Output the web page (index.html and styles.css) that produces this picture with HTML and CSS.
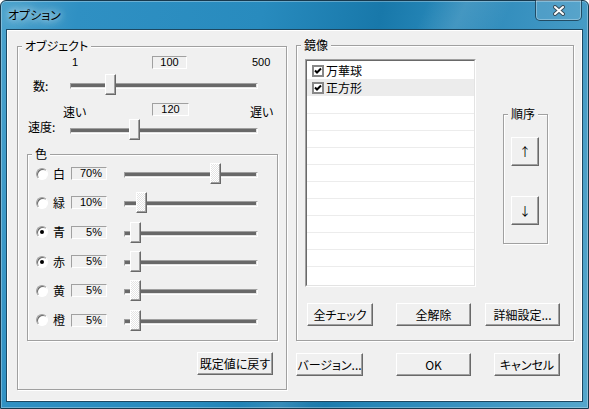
FILE: index.html
```html
<!DOCTYPE html>
<html lang="ja">
<head>
<meta charset="utf-8">
<title>オプション</title>
<link rel="stylesheet" href="styles.css">
</head>
<body>
<div class="window">
  <div class="titlebar">
    <span class="title">オプション</span>
    <div class="close">
      <svg width="12" height="11" viewBox="0 0 12 11">
        <path d="M2 2 L10 9 M10 2 L2 9" stroke="#3a4d5a" stroke-width="4" stroke-linecap="round"/>
        <path d="M2 2 L10 9 M10 2 L2 9" stroke="#fff" stroke-width="2" stroke-linecap="round"/>
      </svg>
    </div>
  </div>
  <div class="client">
    <div class="group obj">
      <span class="gtitle">オブジェクト</span>
      <div class="scale s1">
        <span class="lo num">1</span><span class="vbox num">100</span><span class="hi num">500</span>
      </div>
      <div class="srow r1">
        <span class="slabel">数:</span>
        <div class="track wide"><span class="thumb" style="left:35px"></span></div>
      </div>
      <div class="scale s2">
        <span class="lo">速い</span><span class="vbox num">120</span><span class="hi">遅い</span>
      </div>
      <div class="srow r2">
        <span class="slabel">速度:</span>
        <div class="track wide"><span class="thumb" style="left:59px"></span></div>
      </div>
      <div class="group color">
        <span class="gtitle">色</span>
        <div class="crow"><span class="radio"></span><span class="cname">白</span><span class="vbox pct num">70%</span><div class="track short"><span class="thumb dither" style="left:86px"></span></div></div>
        <div class="crow"><span class="radio"></span><span class="cname">緑</span><span class="vbox pct num">10%</span><div class="track short"><span class="thumb dither" style="left:12px"></span></div></div>
        <div class="crow"><span class="radio on"></span><span class="cname">青</span><span class="vbox pct num">5%</span><div class="track short"><span class="thumb" style="left:6px"></span></div></div>
        <div class="crow"><span class="radio on"></span><span class="cname">赤</span><span class="vbox pct num">5%</span><div class="track short"><span class="thumb" style="left:6px"></span></div></div>
        <div class="crow"><span class="radio"></span><span class="cname">黄</span><span class="vbox pct num">5%</span><div class="track short"><span class="thumb dither" style="left:6px"></span></div></div>
        <div class="crow"><span class="radio"></span><span class="cname">橙</span><span class="vbox pct num">5%</span><div class="track short"><span class="thumb dither" style="left:6px"></span></div></div>
      </div>
      <div class="reset-row"><button class="btn reset">既定値に戻す</button></div>
    </div>
    <div class="right">
      <div class="group mirror">
        <span class="gtitle">鏡像</span>
        <div class="mirror-top">
          <div class="listbox">
            <div class="list-inner">
              <div class="item"><span class="check"><svg width="8" height="8" viewBox="0 0 8 8"><path d="M1 3.5 L3 5.5 L7 1.5" stroke="#000" stroke-width="2" fill="none"/></svg></span><span>万華球</span></div>
              <div class="item sel"><span class="check"><svg width="8" height="8" viewBox="0 0 8 8"><path d="M1 3.5 L3 5.5 L7 1.5" stroke="#000" stroke-width="2" fill="none"/></svg></span><span>正方形</span></div>
              <div class="item"></div>
              <div class="item line"></div>
              <div class="item line"></div>
              <div class="item line"></div>
              <div class="item line"></div>
              <div class="item line"></div>
              <div class="item line"></div>
              <div class="item line"></div>
              <div class="item line"></div>
              <div class="item line"></div>
              <div class="item line"></div>
            </div>
          </div>
          <div class="group order">
            <span class="gtitle">順序</span>
            <button class="btn arrow up">↑</button>
            <button class="btn arrow down">↓</button>
          </div>
        </div>
        <div class="btnrow">
          <button class="btn w66">全チェック</button>
          <button class="btn w75 g23">全解除</button>
          <button class="btn w75 g14">詳細設定...</button>
        </div>
      </div>
      <div class="dlgbtns">
        <button class="btn w67">バージョン...</button>
        <button class="btn w75 g33">OK</button>
        <button class="btn w66 g23">キャンセル</button>
      </div>
    </div>
  </div>
</div>
</body>
</html>
```

FILE: styles.css
```css
* { box-sizing: border-box; }
html, body { margin: 0; padding: 0; }
body {
  width: 589px;
  height: 409px;
  overflow: hidden;
  background: #fff;
  font-family: "Noto Sans CJK JP", "Noto Sans", sans-serif;
  font-size: 12px;
  font-feature-settings: "palt";
  color: #000;
}

.window {
  width: 589px;
  height: 409px;
  border: 1px solid #17394e;
  border-radius: 6px 6px 0 0;
  background:
    linear-gradient(115deg, rgba(255,255,255,0) 55%, rgba(255,255,255,.12) 60%, rgba(255,255,255,0) 66%),
    linear-gradient(100deg, #4ba3cd 0%, #2f90c3 12%, #288bbe 40%, #1878aa 58%, #2585b6 66%, #3b93c1 82%, #55a7cc 100%);
  box-shadow: inset 0 0 0 1px rgba(255,255,255,.3);
  padding: 0 5px 6px 5px;
  display: flex;
  flex-direction: column;
}

.titlebar {
  height: 28px;
  flex: none;
  display: flex;
  justify-content: space-between;
  align-items: flex-start;
}
.title {
  padding-left: 2px;
  line-height: 28px;
  font-size: 12px;
  text-shadow: 0 0 6px rgba(255,255,255,.95), 0 0 12px rgba(255,255,255,.7), 0 0 18px rgba(255,255,255,.5);
}
.close {
  width: 47px;
  height: 21px;
  margin-top: -1px;
  margin-right: 1px;
  border: 1px solid rgba(18,48,68,.75);
  border-top: none;
  border-radius: 0 0 5px 5px;
  background: rgba(255,255,255,.1);
  box-shadow: inset 0 0 0 1px rgba(255,255,255,.3);
  display: flex;
  align-items: center;
  justify-content: center;
}

.client {
  height: 373px;
  flex: none;
  border: 1px solid #1d4862;
  background: #f0f0f0;
  box-shadow: inset 0 0 0 1px #fff;
  padding: 15px 0 0 10px;
  display: flex;
  align-items: flex-start;
}

/* group boxes */
.group {
  position: relative;
  border: 1px solid #a0a0a0;
  box-shadow: inset 1px 1px 0 #fff, 1px 1px 0 #fff;
  flex: none;
}
.gtitle {
  position: absolute;
  top: -8px;
  left: 4px;
  padding: 0 3px;
  line-height: 14px;
  background: #f0f0f0;
  white-space: nowrap;
}

.obj {
  width: 270px;
  height: 344px;
  margin-top: 1px;
}

.num {
  font-family: "Liberation Sans", Arial, sans-serif;
  font-size: 11px;
}

.scale {
  display: flex;
  align-items: center;
  height: 13px;
  line-height: 13px;
}
.s1 { margin-top: 9px; }
.s1 .lo { width: 134px; padding-left: 54px; }
.s1 .vbox { width: 35px; }
.s1 .hi { padding-left: 65px; }
.s2 { margin-top: 8px; }
.s2 .lo { width: 134px; padding-left: 45px; }
.s2 .vbox { width: 37px; }
.s2 .hi { padding-left: 61px; }
.s2 .lo, .s2 .hi { align-self: flex-start; margin-top: 2px; line-height: 14px; }

.vbox {
  height: 13px;
  border: 1px solid;
  border-color: #a0a0a0 #fff #fff #a0a0a0;
  text-align: center;
  line-height: 11px;
  flex: none;
}

.srow {
  display: flex;
  align-items: center;
  height: 21px;
}
.r1 { margin-top: 5px; }
.r2 { margin-top: 3px; }
.slabel {
  width: 52px;
  flex: none;
  line-height: 14px;
}
.r1 .slabel { padding-left: 15px; margin-top: 3px; }
.r2 .slabel { padding-left: 10px; margin-bottom: 5px; }

.track {
  position: relative;
  height: 21px;
  flex: none;
}
.track::before {
  content: "";
  position: absolute;
  left: 0;
  right: 0;
  top: 9px;
  height: 4px;
  border: 1px solid;
  border-color: #a0a0a0 #fff #fff #a0a0a0;
  background: #696969;
  box-shadow: inset -1px -1px 0 #e3e3e3;
}
.track.wide { width: 188px; }
.track.short { width: 134px; margin-left: 17px; }

.thumb {
  position: absolute;
  top: 0;
  width: 11px;
  height: 21px;
  border: 1px solid;
  border-color: #fff #696969 #696969 #fff;
  box-shadow: inset -1px -1px 0 #a0a0a0;
  background: #f0f0f0;
}
.thumb.dither {
  background: repeating-conic-gradient(#fff 0 25%, #e4e4e4 0 50%) 0 0 / 2px 2px;
}

/* colour group */
.color {
  width: 251px;
  height: 187px;
  margin-top: 14px;
  margin-left: 9px;
  padding-top: 4px;
}
.crow {
  display: flex;
  align-items: center;
  height: 29.3px;
  padding-left: 8px;
}
.radio {
  position: relative;
  width: 12px;
  height: 12px;
  flex: none;
  border-radius: 50%;
  border: 1px solid;
  border-color: #a0a0a0 #fff #fff #a0a0a0;
  background: #fff;
  box-shadow: inset 1px 1px 0 #696969;
}
.radio.on::after {
  content: "";
  position: absolute;
  left: 3px;
  top: 3px;
  width: 4px;
  height: 4px;
  border-radius: 50%;
  background: #000;
}
.cname {
  width: 12px;
  margin-left: 5px;
  line-height: 14px;
  flex: none;
}
.vbox.pct {
  width: 36px;
  margin-left: 6px;
  text-align: right;
  padding-right: 4px;
}

.reset-row {
  margin-top: 11px;
  padding-left: 179px;
  display: flex;
}

/* buttons */
.btn {
  font: inherit;
  font-feature-settings: "palt";
  color: #000;
  height: 23px;
  padding: 0;
  margin: 0;
  border: 1px solid;
  border-color: #fff #696969 #696969 #fff;
  box-shadow: inset -1px -1px 0 #a0a0a0;
  background: #f0f0f0;
  display: flex;
  align-items: center;
  justify-content: center;
  line-height: 14px;
  flex: none;
  white-space: nowrap;
}
.reset { width: 76px; }
.w66 { width: 66px; }
.w67 { width: 67px; }
.w75 { width: 75px; }
.g23 { margin-left: 23px; }
.g14 { margin-left: 14px; }
.g33 { margin-left: 33px; }

/* right side */
.right {
  margin-left: 9px;
  width: 278px;
  flex: none;
}
.mirror {
  width: 278px;
  height: 296px;
}
.mirror-top {
  display: flex;
  align-items: flex-start;
  padding-left: 8px;
  margin-top: 13px;
}
.listbox {
  width: 171px;
  height: 228px;
  border: 1px solid;
  border-color: #a0a0a0 #fff #fff #a0a0a0;
  flex: none;
}
.list-inner {
  height: 100%;
  border: 1px solid;
  border-color: #696969 #e3e3e3 #e3e3e3 #696969;
  background: #fff;
  padding-top: 1px;
  overflow: hidden;
}
.item {
  height: 17px;
  display: flex;
  align-items: center;
  padding-left: 5px;
  line-height: 14px;
}
.item.sel { background: #ececec; }
.item.line { border-top: 1px solid #ececec; }
.check {
  width: 12px;
  height: 12px;
  border: 2px solid #878787;
  background: #fff;
  margin-right: 2px;
  margin-top: 1px;
  display: flex;
  align-items: center;
  justify-content: center;
  flex: none;
}
.check svg { display: block; }

.order {
  width: 45px;
  height: 130px;
  margin-left: 27px;
  margin-top: 55px;
}
.arrow {
  width: 28px;
  height: 29px;
  margin-left: 7px;
}
.arrow.up { margin-top: 22px; }
.arrow.down { margin-top: 30px; }

.btnrow {
  display: flex;
  margin-top: 16px;
  padding-left: 10px;
}
.dlgbtns {
  display: flex;
  margin-top: 12px;
}
```
